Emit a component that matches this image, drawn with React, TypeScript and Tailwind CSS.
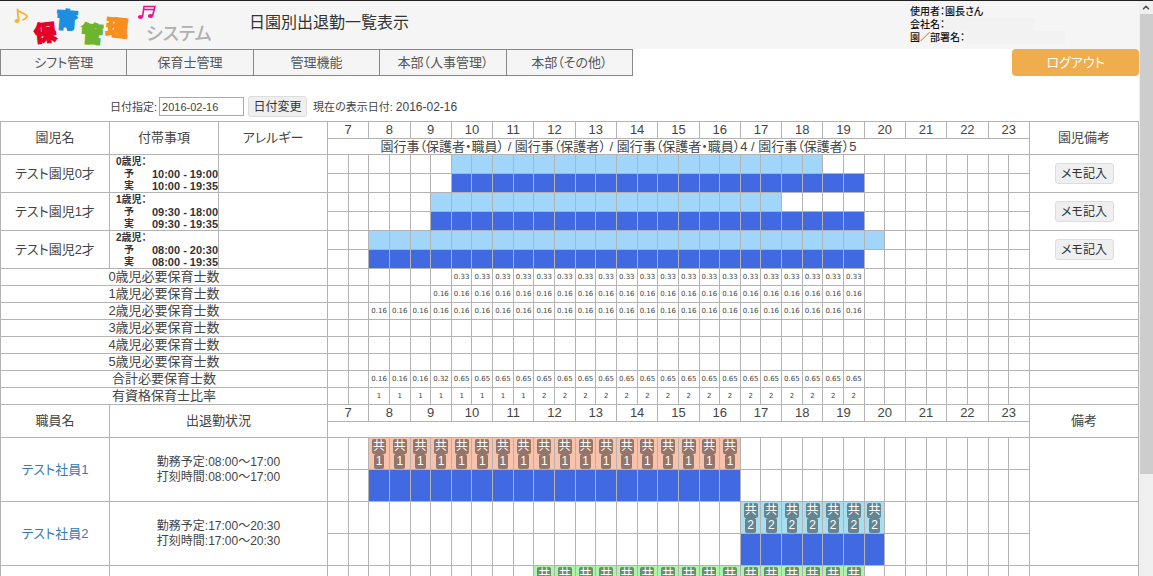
import type { ReactNode } from 'react';
import { ChevronUp } from 'lucide-react';

const HOURS = [7, 8, 9, 10, 11, 12, 13, 14, 15, 16, 17, 18, 19, 20, 21, 22, 23];
const SLOTS = Array.from({ length: 34 }, (_, i) => i);

const menu = ['シフト管理', '保育士管理', '管理機能', '本部（人事管理）', '本部（その他）'];

// from / to are half-hour slots counted from 7:00
const children = [
  { name: 'テスト園児0才', age: '0歳児：', plan: '10:00 - 19:00', actual: '10:00 - 19:35', planRange: [6, 24], actualRange: [6, 26] },
  { name: 'テスト園児1才', age: '1歳児：', plan: '09:30 - 18:00', actual: '09:30 - 19:35', planRange: [5, 22], actualRange: [5, 26] },
  { name: 'テスト園児2才', age: '2歳児：', plan: '08:00 - 20:30', actual: '08:00 - 19:35', planRange: [2, 27], actualRange: [2, 26] },
];

const totals = [
  { label: '0歳児必要保育士数', value: (i: number) => (i >= 6 && i < 26 ? '0.33' : '') },
  { label: '1歳児必要保育士数', value: (i: number) => (i >= 5 && i < 26 ? '0.16' : '') },
  { label: '2歳児必要保育士数', value: (i: number) => (i >= 2 && i < 26 ? '0.16' : '') },
  { label: '3歳児必要保育士数', value: () => '' },
  { label: '4歳児必要保育士数', value: () => '' },
  { label: '5歳児必要保育士数', value: () => '' },
  {
    label: '合計必要保育士数',
    value: (i: number) => {
      if (i < 2 || i >= 26) return '';
      if (i < 5) return '0.16';
      return i === 5 ? '0.32' : '0.65';
    },
  },
  {
    label: '有資格保育士比率',
    value: (i: number) => {
      if (i < 2 || i >= 26) return '';
      return i < 10 ? '1' : '2';
    },
  },
];

const staff = [
  { name: 'テスト社員1', time: '08:00〜17:00', range: [2, 20], shift: '1', cell: 'bg-[#f8c3ad]', badge: 'bg-[#957567]' },
  { name: 'テスト社員2', time: '17:00〜20:30', range: [20, 27], shift: '2', cell: 'bg-[#a8deee]', badge: 'bg-[#64858f]' },
  { name: 'テスト社員3', time: '12:00〜20:00', range: [10, 26], shift: '3', cell: 'bg-[#adf2ad]', badge: 'bg-[#689168]' },
];

const line = 'border border-[#b3b3b3]';
const inRange = (i: number, range: number[]) => i >= range[0] && i < range[1];

const Logo = () => (
  <svg viewBox="0 0 220 48" className="h-12 w-[220px] shrink-0" role="img" aria-label="保育管理システム">
    <g fill="none" stroke="#f9b233" strokeWidth="1.8" strokeLinejoin="round">
      <path d="M18.500 20L17.500 8.500C19 12 27 12.500 27 15c0 2-2 3-4.500 4" />
      <ellipse cx="17" cy="20" rx="1.600" ry="1.200" fill="#f9b233" />
    </g>
    <g fill="none" stroke="#e5178f" strokeWidth="1.6">
      <path d="M142.500 16L144 5.500h11L152.500 15" />
      <path d="M143.500 8.500h11" />
      <ellipse cx="140.500" cy="16" rx="1.800" ry="1.200" fill="#e5178f" />
      <ellipse cx="150.500" cy="15" rx="1.800" ry="1.200" fill="#e5178f" />
    </g>
    <g
      fontFamily="'Noto Sans CJK JP', sans-serif"
      fontWeight="900"
      fontSize="22"
      textAnchor="middle"
      strokeWidth="1.5"
    >
      <text x="45" y="40" fill="#e60027" stroke="#e60027" transform="rotate(-6 45 31)">保</text>
      <text x="67" y="27" fill="#1e8fe0" stroke="#1e8fe0" transform="rotate(4 67 19)">育</text>
      <text x="92" y="41" fill="#6cb52d" stroke="#6cb52d" transform="rotate(4 92 32)">管</text>
      <text x="117" y="35" fill="#f78f1e" stroke="#f78f1e" transform="rotate(6 117 27)">理</text>
    </g>
    <text x="146" y="39" fontFamily="'Noto Sans CJK JP', sans-serif" fontWeight="500" fontSize="18" fill="#b0b0b0">
      システム
    </text>
  </svg>
);

const HourHeader = ({ left, note, right }: { left: ReactNode; note: string; right: string }) => (
  <>
    <tr className="h-[17px]">
      {left}
      {HOURS.map((hour) => (
        <th key={hour} colSpan={2} className={`${line} p-0 font-normal leading-4`}>
          {hour}
        </th>
      ))}
      <th rowSpan={2} className={`${line} p-0 font-normal`}>{right}</th>
    </tr>
    <tr className="h-4">
      <td colSpan={34} className={`${line} p-0 pr-[120px] leading-[15px]`}>{note}</td>
    </tr>
  </>
);

const App = () => {
  return (
    <div className="flex h-screen overflow-hidden border-t border-[#222] bg-white font-['Liberation_Sans','Noto_Sans_CJK_JP',sans-serif] text-[13px] text-[#444] [font-feature-settings:'palt']">
      <main className="min-w-0 flex-1 overflow-hidden">
        <header className="flex h-12 items-start bg-[#f5f5f5]">
          <Logo />
          <h1 className="ml-[29px] flex-1 pt-[10px] text-base leading-6 text-[#333]">日園別出退勤一覧表示</h1>
          <div className="w-[229px] pt-1 text-[10px] font-medium leading-[13px] text-[#111]">
            <p>使用者：園長さん</p>
            <p className="flex">会社名：<span className="w-[90px] bg-[#f2f2f2]" /></p>
            <p className="flex">園／部署名：<span className="w-[100px] bg-[#f2f2f2]" /></p>
          </div>
        </header>

        <nav className="flex justify-between">
          <div className="flex w-[632px]">
            {menu.map((item) => (
              <button
                key={item}
                type="button"
                className="-mr-px h-[27px] flex-1 whitespace-nowrap border border-[#888] bg-[#f5f5f5] text-[#555]"
              >
                {item}
              </button>
            ))}
          </div>
          <button type="button" className="h-[27px] w-[127px] rounded bg-[#f0ad4e] text-white">
            ログアウト
          </button>
        </nav>

        <form className="flex h-[45px] items-end pb-1 pl-[110px] text-[11px]">
          <label htmlFor="date" className="mb-px mr-0.5 leading-[18px]">日付指定:</label>
          <input
            id="date"
            type="text"
            defaultValue="2016-02-16"
            className="mb-px h-[19px] w-[85px] border border-[#aaa] bg-white px-0.5 text-[11px]"
          />
          <button
            type="button"
            className="ml-1 h-[21px] w-[59px] rounded-[3px] border border-[#ddd] bg-[#efefef] text-xs leading-4 text-[#333]"
          >
            日付変更
          </button>
          <p className="mb-px ml-1.5 leading-[18px]">
            現在の表示日付: <span className="text-xs">2016-02-16</span>
          </p>
        </form>

        <table className="w-full table-fixed border-collapse text-center">
          <colgroup>
            <col className="w-[109px]" />
            <col className="w-[109px]" />
            <col className="w-[109px]" />
            {SLOTS.map((i) => (
              <col key={i} />
            ))}
            <col className="w-[109px]" />
          </colgroup>
          <tbody>
            <HourHeader
              left={
                <>
                  <th rowSpan={2} className={`${line} p-0 font-normal`}>園児名</th>
                  <th rowSpan={2} className={`${line} p-0 font-normal`}>付帯事項</th>
                  <th rowSpan={2} className={`${line} p-0 font-normal`}>アレルギー</th>
                </>
              }
              note="園行事（保護者・職員） / 園行事（保護者） / 園行事（保護者・職員）4 / 園行事（保護者）5"
              right="園児備考"
            />
          </tbody>
          {children.map((child) => (
            <tbody key={child.name}>
              <tr className="h-[19px]">
                <td rowSpan={2} className={`${line} p-0`}>{child.name}</td>
                <td rowSpan={2} className={`${line} p-0 text-left text-[10px] font-bold leading-3 text-[#333]`}>
                  <p className="pl-1.5">{child.age}</p>
                  <p className="flex justify-between pl-3.5">
                    <span>予</span>
                    <span className="text-[11px] leading-3">{child.plan}</span>
                  </p>
                  <p className="flex justify-between pl-3.5">
                    <span>実</span>
                    <span className="text-[11px] leading-3">{child.actual}</span>
                  </p>
                </td>
                <td rowSpan={2} className={`${line} p-0`} />
                {SLOTS.map((i) => (
                  <td key={i} className={`${line} p-0 ${inRange(i, child.planRange) ? 'bg-[#a2d5fa]' : ''}`} />
                ))}
                <td rowSpan={2} className={`${line} p-0`}>
                  <button
                    type="button"
                    className="mx-auto block h-[21px] w-[59px] rounded-[3px] border border-[#ddd] bg-[#efefef] text-xs leading-4 text-[#333]"
                  >
                    メモ記入
                  </button>
                </td>
              </tr>
              <tr className="h-[19px]">
                {SLOTS.map((i) => (
                  <td key={i} className={`${line} p-0 ${inRange(i, child.actualRange) ? 'bg-[#4169e1]' : ''}`} />
                ))}
              </tr>
            </tbody>
          ))}
          <tbody>
            {totals.map((row) => (
              <tr key={row.label} className="h-[17px]">
                <th colSpan={3} className={`${line} p-0 font-normal leading-4`}>{row.label}</th>
                {SLOTS.map((i) => (
                  <td key={i} className={`${line} p-0 font-['DejaVu_Sans',sans-serif] text-[7px] leading-4`}>
                    {row.value(i)}
                  </td>
                ))}
                <td className={`${line} p-0`} />
              </tr>
            ))}
            <HourHeader
              left={
                <>
                  <th rowSpan={2} className={`${line} p-0 font-normal`}>職員名</th>
                  <th rowSpan={2} colSpan={2} className={`${line} p-0 font-normal`}>出退勤状況</th>
                </>
              }
              note=""
              right="備考"
            />
          </tbody>
          {staff.map((member) => (
            <tbody key={member.name}>
              <tr className="h-8">
                <td rowSpan={2} className={`${line} p-0`}>
                  <a href="#" className="text-[#337ab7]">{member.name}</a>
                </td>
                <td rowSpan={2} colSpan={2} className={`${line} p-0 text-xs leading-[15px]`}>
                  <p>勤務予定:{member.time}</p>
                  <p>打刻時間:{member.time}</p>
                </td>
                {SLOTS.map((i) => (
                  <td key={i} className={`${line} p-0 ${inRange(i, member.range) ? member.cell : ''}`}>
                    {inRange(i, member.range) && (
                      <div className="flex flex-col items-center text-xs leading-[15px] text-white">
                        <span className={`rounded-xs px-px ${member.badge}`}>共</span>
                        <span className={`rounded-xs px-0.5 ${member.badge}`}>{member.shift}</span>
                      </div>
                    )}
                  </td>
                ))}
                <td rowSpan={2} className={`${line} p-0`} />
              </tr>
              <tr className="h-8">
                {SLOTS.map((i) => (
                  <td key={i} className={`${line} p-0 ${inRange(i, member.range) ? 'bg-[#4169e1]' : ''}`} />
                ))}
              </tr>
            </tbody>
          ))}
        </table>
      </main>

      {/* Scrollbar */}
      <div className="flex w-[14px] shrink-0 flex-col items-center bg-[#f0f0f0]" aria-hidden="true">
        <ChevronUp className="h-[13px] w-[10px] shrink-0 text-[#555]" strokeWidth={4} />
        <div className="h-4/5 w-[13px] bg-[#cdcdcd]" />
      </div>
    </div>
  );
};

export default App;
